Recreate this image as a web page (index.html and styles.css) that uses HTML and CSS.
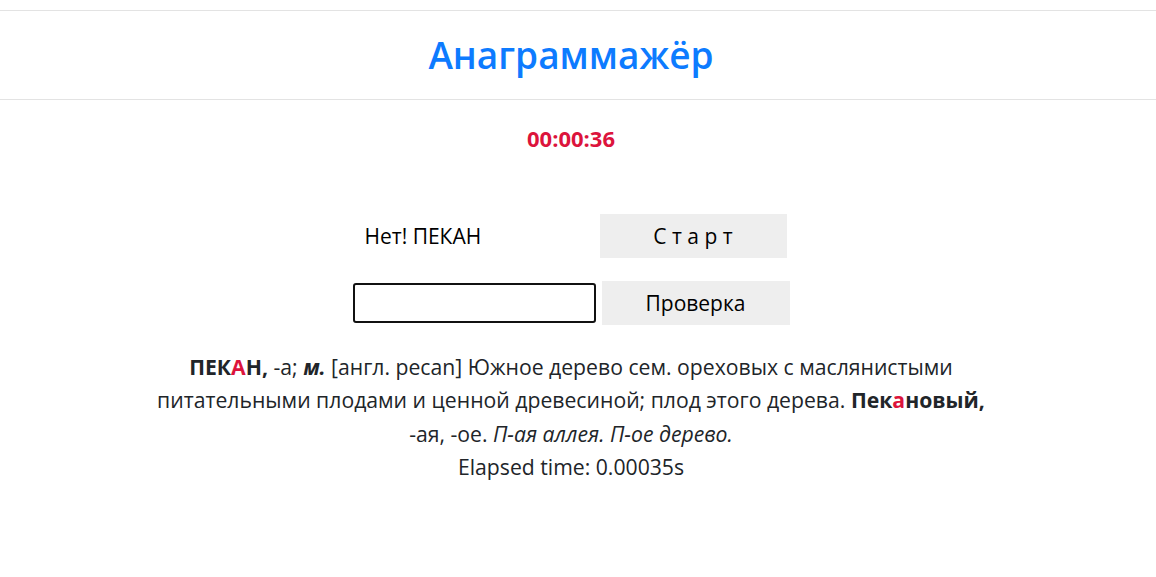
FILE: index.html
```html
<!DOCTYPE html>
<html lang="ru">
<head>
<meta charset="utf-8">
<title>Анаграммажёр</title>
<link rel="stylesheet" href="styles.css">
</head>
<body>
<header class="header">
  <h1 class="title">Анаграммажёр</h1>
</header>
<main class="main">
  <div class="timer">00:00:36</div>
  <div class="game">
    <div class="row">
      <div class="answer">Нет! ПЕКАН</div>
      <button class="btn btn-start">С т а р т</button>
    </div>
    <div class="row row-check">
      <input class="field" type="text">
      <button class="btn btn-check">Проверка</button>
    </div>
  </div>
  <p class="definition"><b>ПЕК<span class="accent">А</span>Н,</b> -а; <b><i>м.</i></b> [англ. pecan] Южное дерево сем. ореховых с маслянистыми питательными плодами и ценной древесиной; плод этого дерева. <b>Пек<span class="accent">а</span>новый,</b> -ая, -ое. <i>П-ая аллея. П-ое дерево.</i><br>Elapsed time: 0.00035s</p>
</main>
</body>
</html>
```
FILE: styles.css
```css
html, body {
  margin: 0;
  padding: 0;
  background: #fff;
}
body {
  font-family: "Open Sans", "Noto Sans", sans-serif;
  color: #212529;
  padding-top: 10px;
}
.header {
  border-top: 1px solid #e3e3e3;
  border-bottom: 1px solid #e3e3e3;
  height: 88px;
  display: flex;
  align-items: center;
  justify-content: center;
  padding-right: 14px;
}
.title {
  margin: 0;
  font-family: "Open Sans", "Noto Sans", sans-serif;
  font-weight: 600;
  font-size: 37px;
  line-height: 48px;
  color: #0d7bff;
}
.main {
  width: 1142px;
  display: flex;
  flex-direction: column;
  align-items: center;
}
.timer {
  margin-top: 23px;
  font-weight: 700;
  font-size: 22px;
  color: #dc143c;
  line-height: 30px;
}
.game {
  margin-top: 61px;
  width: 437px;
  display: flex;
  flex-direction: column;
  gap: 23px;
}
.row {
  display: flex;
  align-items: center;
}
.answer {
  width: 235px;
  padding-left: 12px;
  font-size: 21px;
  color: #000;
}
.btn {
  border: none;
  background: #eeeeee;
  font-family: "Open Sans", "Noto Sans", sans-serif;
  font-size: 21px;
  color: #000;
  height: 44px;
  padding: 0;
}
.btn-start {
  width: 187px;
}
.row-check {
  gap: 6px;
}
.field {
  box-sizing: border-box;
  width: 243px;
  height: 40px;
  border: 2px solid #111;
  border-radius: 3px;
  margin: 0;
}
.btn-check {
  width: 188px;
}
.definition {
  margin: 25px 0 0;
  width: 850px;
  text-align: center;
  font-size: 21.2px;
  line-height: 33.3px;
  color: #212529;
}
.accent {
  color: #dc143c;
}
```
